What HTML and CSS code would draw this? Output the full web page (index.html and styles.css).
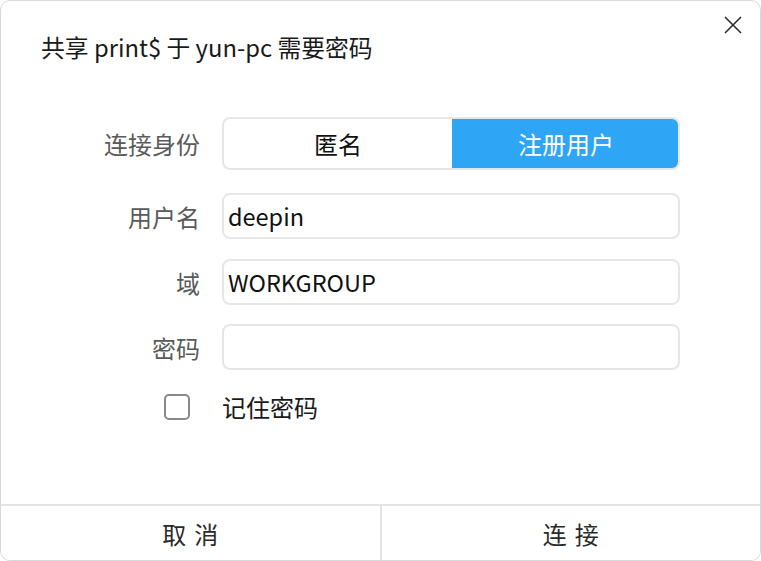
FILE: index.html
```html
<!DOCTYPE html>
<html lang="zh-CN">
<head>
<meta charset="utf-8">
<title>共享 print$ 于 yun-pc 需要密码</title>
<link rel="stylesheet" href="styles.css">
</head>
<body>
<div class="dialog">
  <div class="header">
    <div class="title">共享 print$ 于 yun-pc 需要密码</div>
    <button class="close" aria-label="关闭">
      <svg width="18" height="18" viewBox="0 0 18 18"><path d="M1 1 L17 17 M17 1 L1 17" stroke="#2b2b2b" stroke-width="1.6" fill="none"/></svg>
    </button>
  </div>
  <div class="form">
    <div class="row row-seg">
      <div class="label">连接身份</div>
      <div class="segmented">
        <div class="seg">匿名</div>
        <div class="seg seg-active">注册用户</div>
      </div>
    </div>
    <div class="row row-input first">
      <div class="label">用户名</div>
      <div class="input">deepin</div>
    </div>
    <div class="row row-input">
      <div class="label">域</div>
      <div class="input">WORKGROUP</div>
    </div>
    <div class="row row-input last">
      <div class="label">密码</div>
      <div class="input"></div>
    </div>
    <div class="row row-check">
      <div class="label"><span class="checkbox"></span></div>
      <div class="check-text">记住密码</div>
    </div>
  </div>
  <div class="footer">
    <button class="btn">取消</button>
    <button class="btn">连接</button>
  </div>
</div>
</body>
</html>
```
FILE: styles.css
```css
html, body {
  margin: 0;
  padding: 0;
  background: #ffffff;
}
body {
  font-family: "Noto Sans CJK SC", "Noto Sans", sans-serif;
  color: #1a1a1a;
}
.dialog {
  width: 761px;
  height: 561px;
  box-sizing: border-box;
  border: 1px solid #d9d9d9;
  border-radius: 10px;
  background: #fff;
  display: flex;
  flex-direction: column;
  overflow: hidden;
}
.header {
  position: relative;
  height: 116px;
  flex: none;
}
.title {
  padding: 31px 0 0 40px;
  font-size: 23.8px;
  line-height: 30px;
  color: #1a1a1a;
}
.close {
  position: absolute;
  top: 14px;
  right: 17px;
  width: 20px;
  height: 20px;
  padding: 0;
  border: 0;
  background: none;
  display: flex;
  align-items: center;
  justify-content: center;
}
.form {
  flex: 1;
  display: flex;
  flex-direction: column;
}
.row {
  display: grid;
  grid-template-columns: 199px 458px;
  column-gap: 22px;
  align-items: center;
}
.label {
  text-align: right;
  font-size: 24px;
  color: #5a5a5a;
}
.segmented {
  height: 53px;
  box-sizing: border-box;
  display: flex;
  border-radius: 8px;
  overflow: hidden;
  border: 2px solid #e6e6e6;
}
.seg {
  flex: 1;
  display: flex;
  align-items: center;
  justify-content: center;
  font-size: 24px;
  color: #111;
}
.seg-active {
  background: #2ea5f5;
  color: #fff;
  margin: -2px -2px -2px 0;
}
.row-input {
  margin-top: 20px;
}
.row-input.first {
  margin-top: 23px;
}
.row-input.last {
  margin-top: 19px;
}
.input {
  height: 46px;
  box-sizing: border-box;
  border: 2px solid #e6e6e6;
  border-radius: 8px;
  padding: 0 4px;
  font-size: 23.5px;
  line-height: 42px;
  color: #111;
}
.row-check {
  margin-top: 24px;
}
.checkbox {
  display: inline-block;
  width: 26px;
  height: 26px;
  box-sizing: border-box;
  border: 2px solid #888;
  border-radius: 5px;
  margin-right: 10px;
  vertical-align: middle;
}
.row-check .label {
  display: flex;
  justify-content: flex-end;
}
.check-text {
  font-size: 24px;
  line-height: 26px;
  color: #1a1a1a;
}
.footer {
  flex: none;
  height: 54px;
  display: flex;
  border-top: 2px solid #e3e3e3;
}
.btn {
  flex: 1;
  border: 0;
  background: #fff;
  font-family: inherit;
  font-size: 24px;
  letter-spacing: 8px;
  text-indent: 8px;
  color: #2b2b2b;
  padding: 0;
}
.btn + .btn {
  border-left: 2px solid #e3e3e3;
}
```
